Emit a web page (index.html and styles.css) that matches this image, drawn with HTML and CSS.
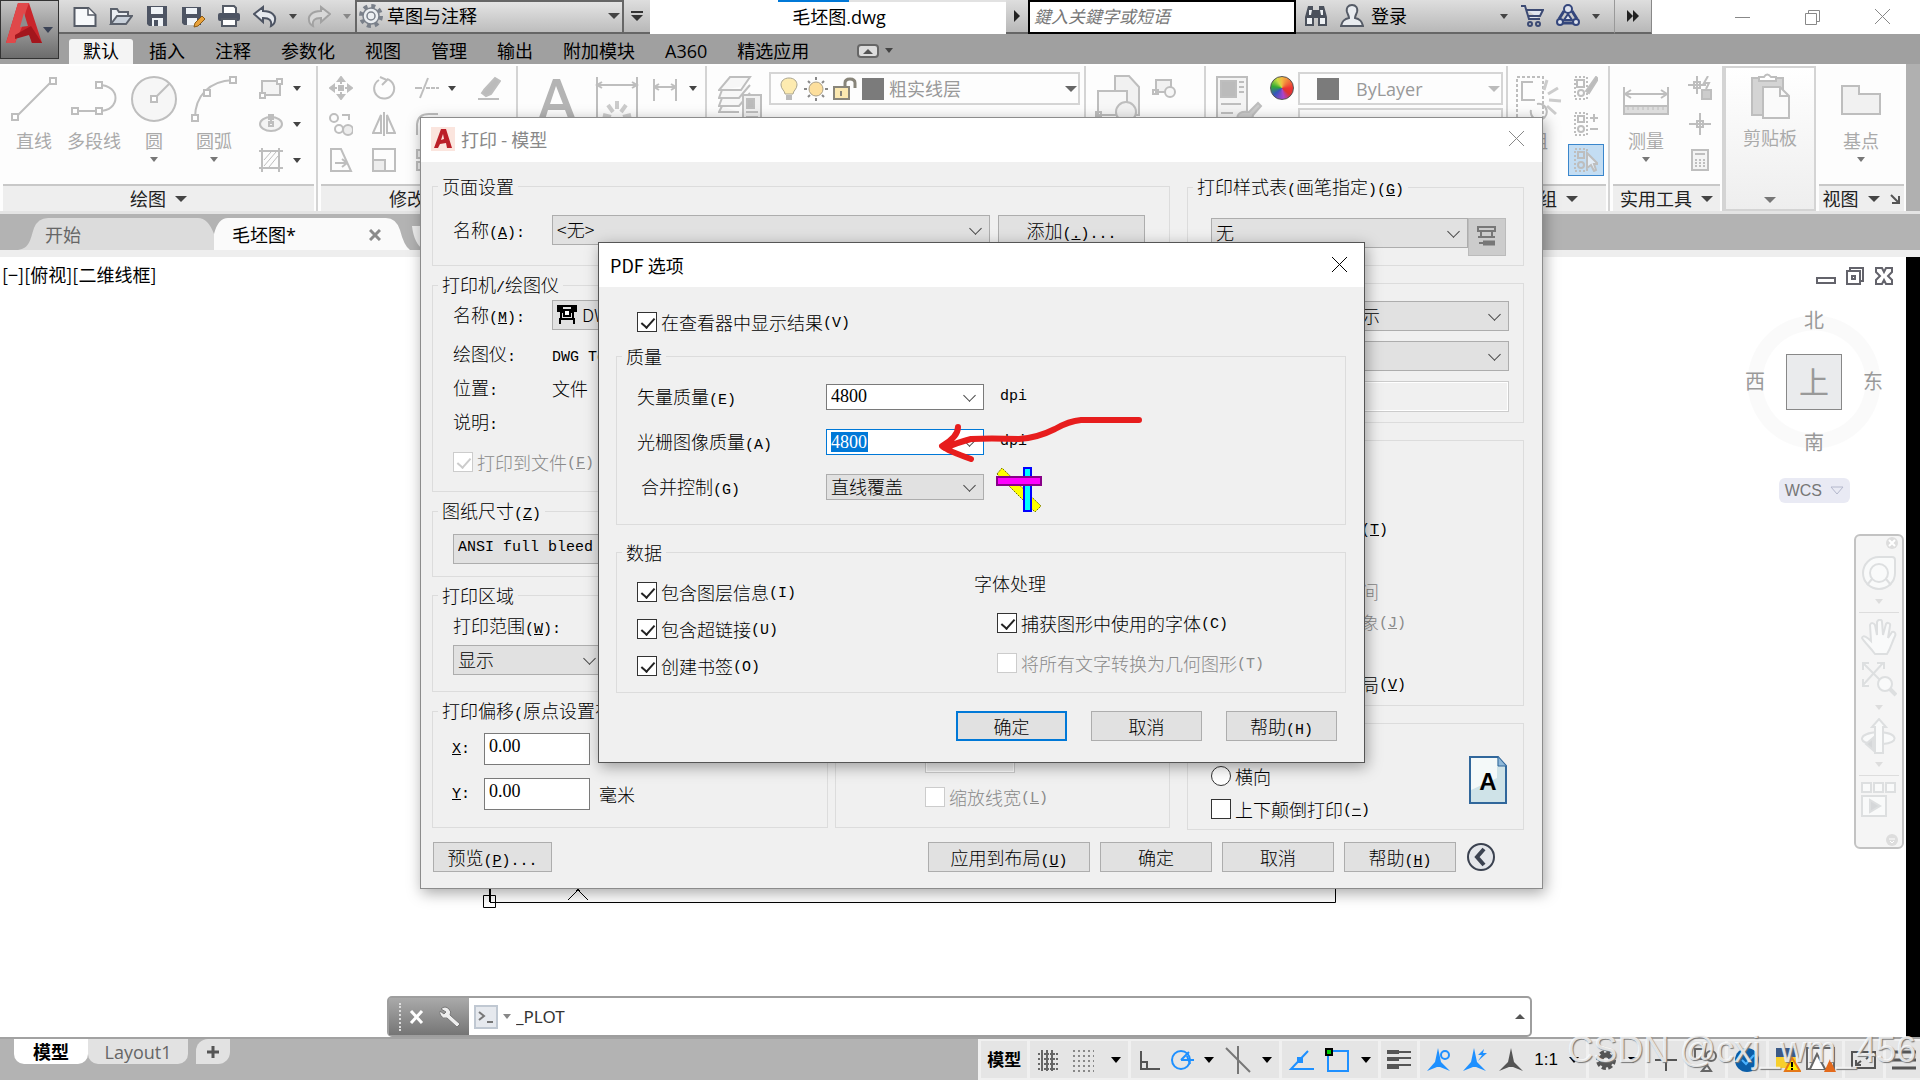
FILE: index.html
```html
<!DOCTYPE html>
<html lang="zh-CN">
  <head>
    <meta charset="UTF-8" />
    <meta name="viewport" content="width=device-width, initial-scale=1.0" />
    <title>毛坯图.dwg</title>
    <link rel="stylesheet" href="styles.css">
  </head>
  <body>
    <!--
      Title bar and ribbon tabs
    -->

    <header class="header">
      <button class="app-btn" type="button" aria-label="A">
        <svg width="38" height="44" viewBox="0 0 38 44">
          <path d="M1 42 13 2h11l13 40H27l-3-10-11 2-3 8z" fill="#c9252b" />
          <path d="M13 2h11l-3 8-4 16-7 16H1z" fill="#e0484a" />
          <path d="M15 26 19 12l4 13z" fill="#8d8d8d" />
          <path d="M10 34l16-9 11 17H27l-3-8-14 4z" fill="#a3161d" />
        </svg>
        <span class="arrow navy"></span>
      </button>

      <div class="titlebar">
        <div class="quick">
          <button type="button" aria-label="新建">
            <svg width="24" height="24" viewBox="0 0 24 24"><path d="M1.500 4h14l7 7v11h-21z" fill="#f7f9fb" stroke="#555b66" stroke-width="2" /><path d="M15 4v7h7" fill="#fff" stroke="#555b66" stroke-width="1.500" /></svg>
          </button>
          <button type="button" aria-label="打开">
            <svg width="24" height="24" viewBox="0 0 24 24"><path d="M2 20V5h6l2 3h9v4" fill="#e9edf2" stroke="#5b616c" stroke-width="2" /><path d="M2 20 8 12h15l-6 8z" fill="#c8d0da" stroke="#5b616c" stroke-width="2" /></svg>
          </button>
          <button type="button" aria-label="保存">
            <svg width="24" height="24" viewBox="0 0 24 24"><path d="M2 2h20v20H4l-2-2z" fill="#4d5463" /><path d="M6 3h12v7H6zM7 14h11v8H7z" fill="#eef2f6" /><path d="M9 16h4v6H9z" fill="#4d5463" /></svg>
          </button>
          <button type="button" aria-label="另存为">
            <svg width="24" height="24" viewBox="0 0 24 24"><path d="M1 3h19v18H3l-2-2z" fill="#4d5463" /><path d="M5 4h11v6H5zM6 14h10v7H6z" fill="#eef2f6" /><path d="M13 23l1-4 7-7 3 3-7 7z" fill="#e9a23b" stroke="#8b5a14" /></svg>
          </button>
          <button type="button" aria-label="打印">
            <svg width="24" height="24" viewBox="0 0 24 24"><path d="M6 9V2h11l2 2v5" fill="#fff" stroke="#555b66" stroke-width="2" /><rect x="1" y="9" width="22" height="8" rx="2" fill="#4d5463" /><path d="M5 15h14v7H5z" fill="#fff" stroke="#555b66" stroke-width="2" /></svg>
          </button>
          <button type="button" aria-label="放弃">
            <svg width="24" height="24" viewBox="0 0 24 24"><path d="M1 10 10 3v4c9 0 13 5 12 9 0 3-2 5-4 6 1-5-1-8-8-8v4z" fill="#e6e9ee" stroke="#4d5463" stroke-width="2" /></svg>
          </button>
          <span class="arrow"></span>
          <button type="button" aria-label="重做">
            <svg width="24" height="24" viewBox="0 0 24 24"><path d="M23 10 14 3v4C5 7 1 12 2 16c0 3 2 5 4 6-1-5 1-8 8-8v4z" fill="#d8d8d8" stroke="#a2a2a2" stroke-width="2" /></svg>
          </button>
          <span class="arrow dim"></span>
        </div>

        <button class="workspace" type="button">
          <svg width="26" height="26" viewBox="0 0 26 26" fill="none" stroke="#7a808a" stroke-width="1.500"><circle cx="13" cy="13" r="10" stroke-dasharray="4 3.850" stroke-width="4" /><circle cx="13" cy="13" r="8" fill="#eceff2" /><circle cx="13" cy="13" r="4" /></svg>
          草图与注释
          <span class="arrow big"></span>
        </button>
        <button class="more" type="button" aria-label="更多">
          <svg width="12" height="12" fill="#333"><path d="M0 1h12v2H0zM0 5h12l-6 6z" /></svg>
        </button>

        <h1 class="doc-name">毛坯图.dwg</h1>

        <button class="search-toggle" type="button" aria-label="展开"><span class="arrow-right"></span></button>
        <input class="search" type="text" placeholder="鍵入关鍵字或短语" aria-label="搜索" />

        <div class="account">
          <svg width="24" height="24" viewBox="0 0 24 24"><path d="M4 2h5v4h6V2h5l3 11v9h-9v-8h-4v8H1v-9z" fill="#4b515c" /><path d="M3 14h5v6H3zM16 14h5v6h-5zM5 6h3l-1 5H5zM16 6h3v5h-2z" fill="#eef1f4" /></svg>
          <svg width="24" height="24" viewBox="0 0 24 24"><path d="M12 1c4 0 6 3 5 7-1 3-2 4-2 6 5 1 7 3 8 8H1c1-5 3-7 8-8 0-2-1-3-2-6-1-4 1-7 5-7z" fill="#e9ecf0" stroke="#555b66" stroke-width="2" /></svg>
          <a href="#">登录</a>
          <span class="arrow"></span>
          <svg width="24" height="24" viewBox="0 0 24 24" fill="none" stroke="#3c4a73" stroke-width="2"><path d="M1 2h4l4 13h11M6 6h17l-3 6H8" fill="#dfe4ef" /><circle cx="10" cy="20" r="2" /><circle cx="18" cy="20" r="2" /></svg>
          <svg width="24" height="24" viewBox="0 0 24 24" fill="#dfe4ef" stroke="#34467c" stroke-width="2"><path d="M8 7 3 15M16 7l5 8M7 19h10" stroke-width="3" /><circle cx="12" cy="5" r="4" /><circle cx="4" cy="18" r="3" /><circle cx="20" cy="18" r="3" /><path d="M12 10l4 6H8z" /></svg>
          <span class="arrow"></span>
        </div>
        <button class="expand" type="button" aria-label="展开工具栏"><span class="arrow-right"></span><span class="arrow-right"></span></button>

        <div class="window-btns">
          <button type="button" aria-label="最小化"><svg width="16" height="16" stroke="#888"><path d="M0 8.500h15" /></svg></button>
          <button type="button" aria-label="还原"><svg width="16" height="16" fill="none" stroke="#888"><path d="M.5 4.500h11v11H.5zM3.500 4V1.500h11v11H12" /></svg></button>
          <button type="button" aria-label="关闭"><svg width="16" height="16" stroke="#888"><path d="M0 0 15 15M15 0 0 15" /></svg></button>
        </div>
      </div>

      <nav class="tabs">
        <button class="active" type="button">默认</button>
        <button type="button">插入</button>
        <button type="button">注释</button>
        <button type="button">参数化</button>
        <button type="button">视图</button>
        <button type="button">管理</button>
        <button type="button">输出</button>
        <button type="button">附加模块</button>
        <button type="button">A360</button>
        <button type="button">精选应用</button>
        <span class="tabs-toggle"><span class="arrow-up"></span></span>
        <span class="arrow"></span>
      </nav>
    </header>

    <!--
      Ribbon
    -->

    <section class="ribbon">
      <div class="panel draw">
        <div class="tools">
          <button class="tool" type="button">
            <svg width="46" height="46" class="ink"><path d="M5 41 41 5" /><path d="M1 38h6v6H1zM39 2h6v6h-6z" fill="#fff" /></svg>
            直线
          </button>
          <button class="tool" type="button">
            <svg width="46" height="46" class="ink"><path d="M4 35h24c22 0 22-26 0-26" /><path d="M1 32h6v6H1zM25 32h6v6h-6zM25 6h6v6h-6z" fill="#fff" /></svg>
            多段线
          </button>
          <button class="tool" type="button">
            <svg width="46" height="46" class="ink"><circle cx="23" cy="23" r="22" fill="#f6f6f6" /><path d="M23 23 38 8" /><path d="M20 20h6v6h-6z" fill="#fff" /></svg>
            圆
            <span class="arrow"></span>
          </button>
          <button class="tool" type="button">
            <svg width="46" height="46" class="ink"><path d="M4 42C4 20 18 5 42 4" /><path d="M1 39h6v6H1zM13 14h6v6h-6zM39 1h6v6h-6z" fill="#fff" /></svg>
            圆弧
            <span class="arrow"></span>
          </button>
          <div class="small-tools pairs">
            <svg width="24" height="24" class="ink"><path d="M3 5h18v14H3z" fill="#f4f4f4" /><path d="M1 17h5v5H1zM18 3h5v5h-5z" fill="#fff" /></svg>
            <span class="arrow"></span>
            <svg width="24" height="24" class="ink"><ellipse cx="12" cy="12" rx="11" ry="7" fill="#f4f4f4" /><path d="M12 12V4M10 10h4v4h-4zM10 3h4v4h-4z" /></svg>
            <span class="arrow"></span>
            <svg width="24" height="24" class="ink"><path d="M3 0v24M20 0v24M0 3h24M0 20h24" /><path d="M5 12l7-8M5 18 17 4M10 19 19 8" stroke-width="1" /></svg>
            <span class="arrow"></span>
          </div>
        </div>
        <h2 class="panel-title">绘图 <span class="arrow big"></span></h2>
      </div>

      <div class="panel modify">
        <div class="tools">
          <div class="small-tools">
            <svg width="24" height="24" class="ink"><path d="M12 1v22M1 12h22" stroke-dasharray="7 8 7" /><path d="M9 5l3-4 3 4zM9 19l3 4 3-4zM5 9l-4 3 4 3zM19 9l4 3-4 3zM10 10h4v4h-4z" fill="#bbb" /></svg>
            <svg width="24" height="24" class="ink"><path d="M7 4a10 10 0 1 0 8-1M8 1l7 3-5 5" /></svg>
            <span class="trim">
              <svg width="24" height="24" class="ink"><path d="M0 12h7" /><path d="M11 12h13" stroke-dasharray="4 1" /><path d="M5 22 13 2" /></svg>
              <span class="arrow"></span>
            </span>
            <svg width="24" height="24" class="ink"><path d="M1 23h21" /><path d="M7 14 18 2l5 3-9 13-5 2-4-3z" fill="#bbb" /></svg>
            <svg width="24" height="24" class="ink"><circle cx="5" cy="6" r="4" /><circle cx="10" cy="17" r="4" /><circle cx="19" cy="18" r="5" fill="#ededed" /><path d="M13 3h7v5" /></svg>
            <svg width="24" height="24" class="ink"><path d="M9 3v18H1zM15 3v18h8zM12 0v24" /></svg>
            <svg width="24" height="24" class="ink"><path d="M2 23V12Q3 2 14 2h9" /></svg>
            <svg width="24" height="24"></svg>
            <svg width="24" height="24" class="ink"><path d="M2 1h10l10 22H2zM6 15h11M13 11l5 4-5 4" /></svg>
            <svg width="24" height="24" class="ink"><path d="M1 1h22v22H1z" /><path d="M1 12h12v11H1z" fill="#ededed" /></svg>
            <svg width="24" height="24" class="ink"><path d="M2 2h8v8H2zM2 14h8v8H2z" fill="#ededed" /></svg>
          </div>
        </div>
        <h2 class="panel-title">修改 <span class="arrow big"></span></h2>
      </div>

      <div class="panel annotate">
        <div class="tools">
          <svg width="46" height="46" fill="#b4b4b4"><path d="M3 46 19 2h7l17 44h-7l-5-13H14l-4 13zM16 27h13L22 9z" /></svg>
          <svg width="46" height="46" class="ink"><path d="M3 0v46M43 0v46M3 8h40M8 5 3 8l5 3M38 5l5 3-5 3" /><path d="M23 24v8M14 28l5 7M32 28l-5 7M9 38l8 2M37 38l-8 2" stroke="#ccc" stroke-width="4" /></svg>
          <svg width="24" height="24" class="ink"><path d="M1 2v22M23 2v22M1 10h22M6 7l-5 3 5 3M18 7l5 3-5 3" /></svg>
          <span class="arrow"></span>
        </div>
      </div>

      <div class="panel layers">
        <div class="tools">
          <svg width="46" height="46" class="ink"><path d="M12 1h20l-9 13H1zM4 14l-3 8h20L32 9M4 22l-3 8h20L32 17M4 30l-3 6h20" fill="#f7f7f7" /><path d="M25 19h18v27H25z" fill="#f1f1f1" /><path d="M29 23h7v9h-7z" fill="#bbb" /><path d="M28 36h12M28 41h12" /></svg>
          <button class="layer-box" type="button">
            <svg width="20" height="24" viewBox="0 0 20 24"><path d="M10 1c5 0 8 3 8 7s-4 6-4 9H6c0-3-4-5-4-9s3-7 8-7z" fill="#fdebb0" stroke="#a9a48f" /><path d="M7 18h6v5H7z" fill="#bbb" /></svg>
            <svg width="24" height="24" viewBox="0 0 24 24"><path d="M12 0v3M12 21v3M0 12h3M21 12h3M4 4l2 2M18 18l2 2M20 4l-2 2M6 18l-2 2" stroke="#888" stroke-width="2" /><circle cx="12" cy="12" r="7" fill="#fddf9d" stroke="#aaa08a" /></svg>
            <svg width="24" height="24" viewBox="0 0 24 24" fill="none" stroke="#88857a" stroke-width="2"><path d="M12 10V6q0-4 5-4t5 4v5" stroke-width="3" /><path d="M1 10h15v12H1z" fill="#fbe8b0" /><path d="M8 14v5" /></svg>
            <span class="swatch"></span>
            粗实线层
            <span class="arrow big"></span>
          </button>
        </div>
      </div>

      <div class="panel block">
        <div class="tools">
          <svg width="46" height="46" class="ink"><path d="M20 1h14l10 11v28H20z" fill="#f1f1f1" /><path d="M3 16h29v24H3z" fill="#f7f7f7" /><circle cx="31" cy="37" r="10" fill="#f1f1f1" /><path d="M1 37h5v5H1z" /></svg>
          <svg width="24" height="24" class="ink"><path d="M4 5h15v12H4z" fill="#f1f1f1" /><circle cx="18" cy="17" r="5" fill="#f7f7f7" /><path d="M1 15h5v4H1z" /></svg>
        </div>
      </div>

      <div class="panel props">
        <div class="tools">
          <svg width="48" height="46" class="ink"><path d="M2 1h30v45H2z" fill="#f4f4f4" /><path d="M6 5h15v16H6z" fill="#bbb" /><path d="M24 6h5M24 11h5M24 16h5M6 28h20M6 37h12" /><path d="M22 44q0-10 12-8l9-9 3 3-8 9q0 6-12 6z" fill="#ccc" /></svg>
          <span class="wheel"></span>
          <div class="prop-boxes">
            <button class="prop-box" type="button"><span class="swatch"></span>ByLayer<span class="arrow big"></span></button>
            <span class="prop-box"></span>
          </div>
        </div>
      </div>

      <div class="panel group">
        <div class="tools">
          <button class="tool" type="button">
            <svg width="46" height="46" class="ink"><path d="M1 1h26v44H1z" stroke-dasharray="3 2" /><path d="M17 6H6v18h13M15 34a8 8 0 1 0 6-6" /><path d="M32 18l10-6M33 24l12 1M28 14l3-10M31 30l9 8" stroke="#ccc" stroke-width="3" /></svg>
            组
          </button>
          <div class="small-tools single">
            <svg width="24" height="24" class="ink"><path d="M1 1h12v22H1z" stroke-dasharray="2 2" /><path d="M3 4h7v7H3z" /><circle cx="7" cy="17" r="3" /><path d="M12 15 22 1l2 2-9 14z" fill="#bbb" /></svg>
            <svg width="24" height="24" class="ink"><path d="M1 1h12v22H1z" stroke-dasharray="2 2" /><path d="M4 4h6v6H4zM16 6h8M20 2v8M16 17h8" /><circle cx="7" cy="17" r="3" /></svg>
            <svg width="24" height="24" class="ink pressed"><path d="M1 1h12v22H1z" stroke-dasharray="2 2" /><path d="M4 4h6v6H4z" /><circle cx="7" cy="17" r="3" /><path d="M13 5v15l4-3 3 6 2-1-2-6h4z" fill="#e4eef8" /></svg>
          </div>
        </div>
        <h2 class="panel-title">组 <span class="arrow big"></span></h2>
      </div>

      <div class="panel utils">
        <div class="tools">
          <button class="tool" type="button">
            <svg width="46" height="46" class="ink"><path d="M1 11v18M45 11v18M2 18h42M8 14l-6 4 6 4M38 14l6 4-6 4" /><path d="M1 30h44v8H1z" fill="#ddd" /><path d="M5 30v4M10 30v4M15 30v4M20 30v4M25 30v4M30 30v4M35 30v4M40 30v4" stroke-width="1" /></svg>
            测量
            <span class="arrow"></span>
          </button>
          <div class="small-tools single">
            <svg width="24" height="24" class="ink"><path d="M0 9h18M9 0v18M6 6h6v6H6zM20 0l-4 7h5l-3 6" /><path d="M14 14h9v9h-9z" fill="#ccc" /></svg>
            <svg width="24" height="24" class="ink"><path d="M1 12h22M12 1v22M9 9h6v6H9z" /></svg>
            <svg width="24" height="24" class="ink"><path d="M4 2h16v20H4z" fill="#f4f4f4" /><path d="M7 6h10" /><path d="M7 12h10M7 15h10M7 18h10" stroke-dasharray="2 2" /></svg>
          </div>
        </div>
        <h2 class="panel-title">实用工具 <span class="arrow big"></span></h2>
      </div>

      <div class="panel clipboard">
        <button class="tool" type="button">
          <svg width="46" height="46" class="ink"><path d="M5 5h31v37H5z" fill="#d4d4d4" /><path d="M12 8V4h5q3-5 7 0h5v4z" fill="#fff" /><path d="M16 14h17l9 9v22H16z" fill="#fafafa" /><path d="M33 14v9h9" /></svg>
          剪贴板
        </button>
        <span class="arrow big"></span>
      </div>

      <div class="panel view">
        <div class="tools">
          <button class="tool" type="button">
            <svg width="46" height="46" class="ink"><path d="M4 10h17v8h21v20H4z" fill="#f1f1f1" /></svg>
            基点
            <span class="arrow"></span>
          </button>
        </div>
        <h2 class="panel-title">视图 <span class="arrow big"></span>
          <svg width="12" height="12" fill="none" stroke="#555" stroke-width="2"><path d="M2 2l8 8M10 3v7H3" /></svg>
        </h2>
      </div>
    </section>

    <nav class="doc-tabs">
      <button type="button">开始</button>
      <button class="active" type="button">毛坯图*
        <svg width="12" height="12" stroke="#8a8a8a" stroke-width="3"><path d="M1 1l10 10M11 1 1 11" /></svg>
      </button>
      <button class="new" type="button" aria-label="新图形"></button>
    </nav>

    <!--
      Drawing area
    -->

    <main class="drawing">
      <p class="view-label">[−][俯视][二维线框]</p>

      <div class="mdi-btns">
        <svg width="20" height="20" fill="#fff" stroke="#63636b" stroke-width="2"><path d="M1 12h18v5H1z" /></svg>
        <svg width="20" height="20" fill="#fff" stroke="#63636b" stroke-width="2"><path d="M5 2h13v13H5z" /><path d="M2 5h13v13H2z" /><path d="M7 10h3v3H7z" /></svg>
        <svg width="20" height="20" fill="#fff" stroke="#63636b" stroke-width="2"><path d="M2 2h6l2 4 2-4h6v4l-4 4 4 4v4h-6l-2-4-2 4H2v-4l4-4-4-4z" /></svg>
      </div>

      <div class="viewcube">
        <span>北</span>
        <span>西</span>
        <button type="button">上</button>
        <span>东</span>
        <span>南</span>
      </div>
      <button class="wcs" type="button">WCS
        <svg width="14" height="9" fill="none" stroke="#b4b8cc"><path d="M1 1h12L7 8z" /></svg>
      </button>

      <div class="navbar">
        <svg class="corner" width="12" height="12"><circle cx="6" cy="6" r="6" fill="#ddd" /><path d="M3 3l6 6M9 3 3 9" stroke="#fff" stroke-width="2" /></svg>
        <svg width="36" height="36" class="faint"><path d="M18 2h13q3 0 3 3v13A16 16 0 1 1 18 2z" /><circle cx="18" cy="18" r="9" /><path d="M11 24l-5 6M25 24l5 6" /></svg>
        <span class="arrow faint-arrow"></span>
        <hr />
        <svg width="36" height="36" class="faint"><path d="M14 35C9 28 4 24 1 19c1-4 6 0 9 3L9 6c1-3 4-2 5 0l2 10V3c1-3 5-3 5 0l1 13 3-11c1-2 5-1 4 2l-2 12 4-6c3-1 4 2 3 4-3 6-4 12-8 18z" /></svg>
        <svg width="36" height="36" class="faint"><path d="M2 2l20 20M22 2 2 24M2 9V2h6M16 2h7v6M2 18v7h6" /><circle cx="24" cy="23" r="7" /><path d="M29 28l6 6" stroke-width="4" /></svg>
        <span class="arrow faint-arrow"></span>
        <svg width="36" height="36" class="faint"><path d="M18 14C-4 15-4 26 14 26h8c16-1 16-11-4-12z" /><path d="M14 35V9h-3l7-8 7 8h-3v26z" /><path d="M12 20v12l-7-6z" fill="#d5d7d9" /></svg>
        <span class="arrow faint-arrow"></span>
        <hr />
        <svg width="36" height="36" class="faint"><path d="M1 1h9v9H1zM13 1h9v9h-9zM25 1h9v9h-9zM1 14h24v20H1z" /><path d="M9 18v12l10-6z" fill="#d5d7d9" /></svg>
        <svg class="corner last" width="12" height="12"><circle cx="6" cy="6" r="6" fill="#ddd" /><path d="M3 5h6M4 7l2 2 2-2" stroke="#fff" fill="none" /></svg>
      </div>

      <svg class="sketch" width="860" height="24" fill="none" stroke="#000">
        <path d="M7.500 0v15M1.500 8.500h12v12h-12z" />
        <path d="M8 15.500h845.500V0M96 3 86 13M96 3l10 10M94 0l4 4M98 0l-4 4" />
        <path d="M8 0v15" stroke-width="2" />
      </svg>

      <div class="command">
        <div class="command-handle">
          <i></i>
          <svg width="16" height="16" stroke="#fff" stroke-width="3"><path d="M2 2l11 12M13 2 2 14" /></svg>
          <svg width="22" height="22"><path d="M2 3q4-4 8 0 3 3 1 6l10 9-3 3-10-9q-4 1-6-2-2-3-1-5l4 3 2-2z" fill="#eee" stroke="#777" /></svg>
        </div>
        <svg width="24" height="24" fill="none" stroke="#c0c8d2" stroke-width="2"><path d="M1 1h22v22H1z" fill="#e6e9ee" /><path d="M5 7l5 4-5 4M13 17h6" stroke="#777" /></svg>
        <span class="arrow dim"></span>
        <input type="text" value="_PLOT" aria-label="命令" />
        <span class="arrow-up"></span>
      </div>
    </main>

    <!--
      Layout tabs and status bar
    -->

    <footer class="footer">
      <nav class="layouts">
        <button class="active" type="button">模型</button>
        <button type="button">Layout1</button>
        <button class="plus" type="button" aria-label="新建布局"><svg width="14" height="14" stroke="#555" stroke-width="3"><path d="M7 1v12M1 7h12" /></svg></button>
      </nav>
      <div class="status">
        <div class="cell"><b>模型</b></div>
        <div class="cell">
          <svg width="24" height="24" stroke="#666" stroke-width="2"><path d="M6 2v21M11 2v21M16 2v21" /><path d="M2 6h21M2 11h21M2 16h21M2 21h21" stroke-dasharray="2 1" /></svg>
          <svg class="dots" width="24" height="24" stroke="#888" stroke-width="2"><path d="M2 3h21M2 8h21M2 13h21M2 18h21M2 23h21" stroke-dasharray="2 3" /></svg>
          <span class="arrow black"></span>
        </div>
        <div class="cell polar">
          <svg width="24" height="24" fill="none" stroke="#555" stroke-width="2"><path d="M4 3v18h19M4 14h6v7" /></svg>
          <svg width="24" height="24" fill="none" stroke="#1e90ff" stroke-width="2"><circle cx="11" cy="12" r="9" /><path d="M11 12h13M11 12l8-8M17 8l3 8" /></svg>
          <span class="arrow black"></span>
          <svg width="28" height="28" fill="none" stroke="#777" stroke-width="2"><path d="M2 2l24 24M14 0v28" /></svg>
          <span class="arrow black"></span>
        </div>
        <div class="cell snap">
          <svg width="26" height="24" fill="none" stroke="#1e90ff" stroke-width="2"><path d="M20 3 3 21h23" /><path d="M10 10h4v4h-4z" fill="#1e90ff" /></svg>
          <svg width="24" height="24" fill="none" stroke="#1e90ff" stroke-width="2"><path d="M3 3h20v20H3z" /><path d="M1 1h6v6H1z" fill="#0c0" stroke="#000" /></svg>
          <span class="arrow black"></span>
        </div>
        <div class="cell">
          <svg width="24" height="24" stroke="#555"><path d="M0 4h24M0 10h24M0 17h24" stroke-width="2" /><path d="M0 4h12M0 11h12M0 19h12" stroke-width="4" /></svg>
        </div>
        <div class="cell notes">
          <svg width="26" height="26" fill="#1e90ff"><path d="M12 1l3 14 9 9-10-4h-3L1 24l8-9z" /><circle cx="19" cy="8" r="4" fill="#e6e6e6" stroke="#1e90ff" stroke-width="2" /></svg>
          <svg width="26" height="26" fill="#1e90ff"><path d="M12 1l3 14 9 9-10-4h-3L1 24l8-9z" /><path d="M22 2l-6 6h4l-4 6 9-8h-4z" /></svg>
          <svg width="26" height="26" fill="#555"><path d="M13 1l3 14 9 9-10-4h-4L1 24l9-9z" /></svg>
          <span>1:1</span>
          <span class="arrow black"></span>
        </div>
        <div class="cell gear">
          <svg width="22" height="22" fill="none" stroke="#555"><circle cx="11" cy="11" r="8" stroke-width="4" stroke-dasharray="4 2.300" /><circle cx="11" cy="11" r="5" stroke-width="5" /></svg>
          <span class="arrow black"></span>
        </div>
        <div class="cell"><svg width="24" height="24" stroke="#555" stroke-width="2"><path d="M12 2v21M1 12h22" /></svg></div>
        <div class="cell"><svg width="26" height="26" fill="none" stroke="#666" stroke-width="2"><path d="M2 2h10v10H2zM14 18l4 6H9z" /><circle cx="18" cy="9" r="5" /></svg></div>
        <div class="cell"><svg width="26" height="26"><circle cx="13" cy="13" r="12" fill="#0b5ea8" /><path d="M8 13l4 4 8-9" stroke="#4bb2ff" stroke-width="2" fill="none" /></svg></div>
        <div class="cell trays">
          <svg width="26" height="26"><path d="M1 1h20v9H1z" fill="#3c5a86" /><path d="M1 10h20v11H1z" fill="#f7cf2c" /><path d="M17 11l8 13H10z" fill="#fe0" stroke="#e57817" stroke-width="2" /><path d="M17 15v5M17 21v2" stroke="#000" stroke-width="2" /></svg>
          <svg width="30" height="28" fill="none" stroke="#666" stroke-width="2"><path d="M1 2h27v21H1z" fill="#f1f1f1" /><path d="M4 23l7-15 8 15" fill="#fff" /><path d="M24 13l6 13H18z" fill="#e36a1c" stroke="none" /></svg>
        </div>
        <div class="cell"><svg width="26" height="26" fill="none" stroke="#555" stroke-width="2"><path d="M1 5h23v16H1zM5 13v5h5M5 18l5-4M20 12V8h-5M20 8l-5 4" /></svg></div>
        <div class="cell"><svg width="24" height="24" stroke="#555" stroke-width="3"><path d="M0 4h24M0 12h24M0 20h24" /></svg></div>
      </div>
      <p class="watermark">CSDN @cxj_wm_456</p>
    </footer>

    <!--
      Plot dialog
    -->

    <section class="dialog plot" aria-label="打印 - 模型">
      <div class="dialog-title">
        <svg width="24" height="24"><path d="M0 0h24v24H0z" fill="#fbe5de" /><path d="M3 21 10 2h5l6 19h-5l-1-5-6 1-2 4zM10 13l3-1-1-5z" fill="#bb1f28" fill-rule="evenodd" /></svg>
        <h2>打印 - 模型</h2>
        <button type="button" aria-label="关闭"><svg width="16" height="16" stroke="#888"><path d="M0 0 15 15M15 0 0 15" /></svg></button>
      </div>
      <form class="plot-body">
        <div class="plot-left">
          <fieldset>
            <legend>页面设置</legend>
            <div class="row first">
              <label for="setup">名称<span class="key">(<u>A</u>):</span></label>
              <span class="select setup"><select id="setup"><option>&lt;无&gt;</option></select></span>
              <button class="btn add" type="button">添加<span class="key">(<u>.</u>)...</span></button>
            </div>
          </fieldset>

          <fieldset class="printer">
            <legend>打印机<span class="key">/</span>绘图仪</legend>
            <div class="row">
              <label for="printer">名称<span class="key">(<u>M</u>):</span></label>
              <span class="select setup with-icon">
                <svg width="20" height="20" fill="none" stroke="#000" stroke-width="2"><path d="M1 2h4v5H1zM15 2h4v5h-4z" fill="#000" /><path d="M5 2h10M4 8v7h12V8M2 15h16M3 15v5M17 15v5M4 8h12" /><path d="M7 6h6v6H7z" fill="#fff" /></svg>
                <select id="printer"><option>DWG</option></select>
              </span>
            </div>
            <dl>
              <dt>绘图仪<span class="key">:</span></dt>
              <dd><span class="key">DWG To</span></dd>
              <dt>位置<span class="key">:</span></dt>
              <dd>文件</dd>
              <dt>说明<span class="key">:</span></dt>
              <dd></dd>
            </dl>
            <label class="check off"><input type="checkbox" checked disabled />打印到文件<span class="key">(<u>F</u>)</span></label>
          </fieldset>

          <fieldset class="paper">
            <legend>图纸尺寸<span class="key">(<u>Z</u>)</span></legend>
            <span class="select mono"><select aria-label="图纸尺寸"><option>ANSI full bleed</option></select></span>
          </fieldset>

          <fieldset class="area">
            <legend>打印区域</legend>
            <label for="area">打印范围<span class="key">(<u>W</u>):</span></label>
            <span class="select"><select id="area"><option>显示</option></select></span>
          </fieldset>

          <div class="plot-pair">
            <fieldset class="offset">
              <legend>打印偏移<span class="key">(</span>原点设置在</legend>
              <div class="row"><label class="key" for="x"><u>X</u>:</label><input id="x" type="text" value="0.00" /></div>
              <div class="row"><label class="key" for="y"><u>Y</u>:</label><input id="y" type="text" value="0.00" />毫米</div>
            </fieldset>
            <fieldset class="scale">
              <input type="text" disabled aria-label="单位" />
              <label class="check off"><input type="checkbox" disabled />缩放线宽<span class="key">(<u>L</u>)</span></label>
            </fieldset>
          </div>
        </div>

        <div class="plot-right">
          <fieldset>
            <legend>打印样式表<span class="key">(</span>画笔指定<span class="key">)(<u>G</u>)</span></legend>
            <div class="row first">
              <span class="select"><select aria-label="打印样式表"><option>无</option></select></span>
              <button class="btn edit" type="button" aria-label="编辑"><svg width="20" height="24" fill="none" stroke="#777" stroke-width="2"><path d="M1 2h17v4H1zM4 6v6h11V6M1 12h17M2 18h12" /><path d="M6 18h12" stroke-width="5" /></svg></button>
            </div>
          </fieldset>

          <fieldset class="shade">
            <span class="select"><select aria-label="着色打印"><option>按显示</option></select></span>
            <span class="select"><select aria-label="质量"><option></option></select></span>
            <input type="text" disabled aria-label="DPI" />
          </fieldset>

          <fieldset class="options">
            <label class="check"><input type="checkbox" />使用透明度打印<span class="key">(<u>T</u>)</span></label>
            <label class="check off skip"><input type="checkbox" disabled />最后打印图纸空间</label>
            <label class="check off"><input type="checkbox" disabled />隐藏图纸空间对象<span class="key">(<u>J</u>)</span></label>
            <label class="check skip"><input type="checkbox" />将修改保存到布局<span class="key">(<u>V</u>)</span></label>
          </fieldset>

          <fieldset class="orient">
            <div class="orient-row">
              <div>
                <label class="check"><input type="radio" name="orient" />横向</label>
                <label class="check"><input type="checkbox" />上下颠倒打印<span class="key">(<u>−</u>)</span></label>
              </div>
              <span class="page-icon">
                <svg width="38" height="48"><path d="M1 1h28l8 9v37H1z" fill="#cfe3e8" stroke="#31679b" stroke-width="2" /><path d="M2 2h26v20L2 34z" fill="#f4f9f9" /><path d="M29 1v9h8" fill="#8fb8d8" stroke="#31679b" /></svg>
                <b>A</b>
              </span>
            </div>
          </fieldset>
        </div>

        <div class="plot-foot">
          <button class="btn preview" type="button">预览<span class="key">(<u>P</u>)...</span></button>
          <button class="btn apply" type="button">应用到布局<span class="key">(<u>U</u>)</span></button>
          <button class="btn" type="button">确定</button>
          <button class="btn" type="button">取消</button>
          <button class="btn" type="button">帮助<span class="key">(<u>H</u>)</span></button>
          <button class="round" type="button" aria-label="收起"><svg width="30" height="30" fill="none" stroke="#3b4250"><circle cx="15" cy="15" r="13" fill="#e4e6ea" stroke-width="2" /><path d="M18 7l-7 8 7 8" stroke-width="4" /></svg></button>
        </div>
      </form>
    </section>

    <!--
      PDF options dialog
    -->

    <section class="dialog pdf" aria-label="PDF 选项">
      <div class="dialog-title">
        <h2>PDF 选项</h2>
        <button type="button" aria-label="关闭"><svg width="16" height="16" stroke="#000"><path d="M0 0 15 15M15 0 0 15" /></svg></button>
      </div>
      <form class="pdf-body">
        <label class="check show"><input type="checkbox" checked />在查看器中显示结果<span class="key">(V)</span></label>

        <fieldset class="quality">
          <legend>质量</legend>
          <div class="row">
            <label for="vector">矢量质量<span class="key">(E)</span></label>
            <span class="select white"><select id="vector"><option>4800</option></select></span>
            <span class="key unit">dpi</span>
          </div>
          <div class="row">
            <label for="raster">光栅图像质量<span class="key">(A)</span></label>
            <span class="select white focus"><input id="raster" type="text" value="4800" /></span>
            <span class="key unit">dpi</span>
          </div>
          <div class="row">
            <label class="indent" for="merge">合并控制<span class="key">(G)</span></label>
            <span class="select"><select id="merge"><option>直线覆盖</option></select></span>
            <svg class="merge-icon" width="46" height="46"><path d="M1 7 6 1l39 38-6 6z" fill="#ff0" stroke="#770" stroke-dasharray="2 1" /><path d="M28 1h7v43h-7z" fill="#0ff" stroke="#00f" stroke-width="2" /><path d="M1 10h44v8H1z" fill="#f0f" stroke="#808" stroke-width="2" /></svg>
          </div>
        </fieldset>

        <fieldset class="data">
          <legend>数据</legend>
          <div class="data-cols">
            <div>
              <label class="check"><input type="checkbox" checked />包含图层信息<span class="key">(I)</span></label>
              <label class="check"><input type="checkbox" checked />包含超链接<span class="key">(U)</span></label>
              <label class="check"><input type="checkbox" checked />创建书签<span class="key">(O)</span></label>
            </div>
            <div class="fonts">
              <p>字体处理</p>
              <label class="check"><input type="checkbox" checked />捕获图形中使用的字体<span class="key">(C)</span></label>
              <label class="check off"><input type="checkbox" disabled />将所有文字转换为几何图形<span class="key">(T)</span></label>
            </div>
          </div>
        </fieldset>

        <div class="pdf-foot">
          <button class="btn default" type="button">确定</button>
          <button class="btn" type="button">取消</button>
          <button class="btn" type="button">帮助<span class="key">(H)</span></button>
        </div>
      </form>

      <svg class="mark" width="210" height="50" fill="none" stroke="#e71d1d" stroke-width="6" stroke-linecap="round" stroke-linejoin="round">
        <path d="M203 8h-58q-12 1-26 9-18 9-36 10-30-1-48 0-12 3-26 9M22 15q0 10-16 19 6 5 29 13" />
      </svg>
    </section>
  </body>
</html>
```
FILE: styles.css
```css
/*
  Global styles
*/

:root {
  --face: #f0f0f0;
  --line: #dcdcdc;
  --control: #e1e1e1;
  --control-line: #adadad;
  --blue: #0078d7;
  --bar: #b3b3b3;
}
* {
  margin: 0;
  padding: 0;
  box-sizing: border-box;
}
body {
  display: flex;
  flex-direction: column;
  min-height: 100vh;
  overflow: hidden;
  color: #000;
  font: 18px/20px "Open Sans", "Noto Sans CJK SC", sans-serif;
  background-color: white;
}
button,
input,
select {
  font: inherit;
  color: inherit;
  border: none;
  outline: none;
  background: none;
}
h1,
h2 {
  font-size: 18px;
  font-weight: 400;
}
svg {
  flex: none;
  display: block;
}

/*
  Small shared shapes
*/

.arrow,
.arrow-up,
.arrow-right {
  flex: none;
  display: inline-block;
  border: 4px solid transparent;
}
.arrow {
  border-width: 5px 4px 0;
  border-top-color: #444;
}
.arrow.big {
  border-width: 6px 6px 0;
}
.arrow.black {
  border-width: 6px 5px 0;
  border-top-color: black;
}
.arrow.navy {
  border-width: 6px 5px 0;
  border-top-color: #3b4356;
}
.arrow.dim {
  border-top-color: #888;
}
.arrow-up {
  border-width: 0 5px 5px;
  border-bottom-color: #555;
}
.arrow-right {
  border-width: 6px 0 6px 6px;
  border-left-color: #222;
}
.ink {
  fill: none;
  stroke: #bebebe;
  stroke-width: 2;
}
.faint {
  fill: #f9fafa;
  stroke: #dddfe0;
  stroke-width: 2;
}
.swatch {
  width: 22px;
  height: 22px;
  background-color: #7b7b7b;
}

/*
  Header
*/

.header {
  display: grid;
  grid-template-columns: 59px 1fr;
  grid-template-rows: 34px 30px;
  background-color: #a0a0a0;
}
.app-btn {
  display: flex;
  align-items: center;
  grid-row: 1 / 3;
  height: 59px;
  padding-left: 4px;
  border: 1px solid #333;
  background: linear-gradient(#c4c4c4, #6c6c6c);
}
.app-btn svg {
  margin-bottom: 14px;
}
.titlebar {
  display: flex;
  background-color: white;
}
.quick,
.account {
  display: flex;
  align-items: center;
  gap: 12px;
  padding: 0 6px 0 14px;
  border-bottom: 2px solid #666;
  background: linear-gradient(#dedede, #b8b8b8);
}
.quick .arrow {
  margin-right: -2px;
}
.workspace {
  display: flex;
  align-items: center;
  gap: 3px;
  width: 269px;
  padding: 0 2px 2px 1px;
  border: 2px solid #666;
  background: linear-gradient(#e4e4e4, #bdbdbd);
}
.workspace .arrow {
  margin-left: auto;
}
.more,
.search-toggle,
.expand {
  display: flex;
  align-items: center;
  justify-content: center;
  width: 26px;
  border-bottom: 2px solid #666;
  background: linear-gradient(#dedede, #b8b8b8);
}
.doc-name {
  flex: 1;
  height: 34px;
  padding-left: 22px;
  line-height: 30px;
  text-align: center;
  border-top: 2px solid #e2e2e2;
  border-image: linear-gradient(90deg, #fff 36%, var(--blue) 36%, var(--blue) 56%, #e2e2e2 56%) 1;
}
.search-toggle {
  width: 22px;
}
.search {
  width: 268px;
  padding: 0 4px 2px;
  border: 2px solid black;
  background-color: white;
}
.search::placeholder {
  color: #777;
  font-size: 17px;
  font-style: italic;
}
.account {
  width: 318px;
  padding-left: 8px;
}
.account a {
  width: 117px;
  margin-left: -5px;
  color: black;
  text-decoration: none;
}
.expand {
  width: 38px;
  border-left: 1px solid #999;
  border-right: 1px solid #888;
}
.window-btns {
  display: flex;
  justify-content: space-between;
  width: 268px;
  padding: 0 29px 0 83px;
}
.tabs {
  display: flex;
  align-items: flex-end;
  gap: 2px;
  padding-left: 10px;
}
.tabs button {
  height: 25px;
  padding: 0 14px;
  line-height: 25px;
}
.tabs button.active {
  border-radius: 3px 3px 0 0;
  background-color: #f4f4f4;
}
.tabs-toggle {
  display: flex;
  align-items: center;
  justify-content: center;
  width: 22px;
  height: 14px;
  margin: 0 4px 6px 32px;
  border: 2px solid #666;
  border-radius: 4px;
  background-color: #ddd;
}
.tabs .arrow {
  margin-bottom: 11px;
}

/*
  Ribbon
*/

.ribbon {
  display: flex;
  height: 150px;
  padding-top: 2px;
  border-bottom: 3px solid #e4e4e4;
  background: linear-gradient(90deg, #fff 1906px, #b0b0b0 1906px);
}
.panel {
  display: flex;
  flex: none;
  flex-direction: column;
  border-right: 2px solid #d4d4d4;
  background-color: #fdfdfd;
}
.panel-title {
  display: flex;
  align-items: center;
  justify-content: center;
  gap: 9px;
  height: 27px;
  margin: 0 2px 0 3px;
  color: #222;
  border-top: 2px solid #c8c8c8;
  background-color: #eee;
}
.tools {
  display: flex;
  flex: 1;
}
.tool {
  display: flex;
  flex-direction: column;
  align-items: center;
  width: 60px;
  padding-top: 10px;
  color: #aaa;
}
.tool svg {
  margin-bottom: 9px;
}
.tool .arrow {
  margin-top: 6px;
  border-top-color: #777;
}
.small-tools {
  display: grid;
  grid-template-columns: 43px 62px 43px 24px;
  grid-auto-rows: 36px;
  align-items: center;
  padding-top: 4px;
}
.small-tools.pairs {
  grid-template-columns: 34px 8px;
}
.small-tools.single {
  grid-template-columns: 36px;
  justify-items: center;
}
.draw {
  width: 318px;
}
.draw .tools {
  padding-left: 4px;
}
.draw .small-tools {
  margin-left: 15px;
}
.modify {
  width: 200px;
}
.modify .tools {
  padding-left: 11px;
}
.modify .small-tools {
  grid-template-columns: 43px 43px 62px 24px;
}
.trim {
  display: flex;
  align-items: center;
  gap: 9px;
}
.annotate {
  width: 189px;
}
.annotate .tools {
  gap: 14px;
  padding: 11px 0 0 16px;
}
.annotate .arrow {
  margin: 9px 0 0 -2px;
}
.annotate svg + svg + svg {
  margin-left: -1px;
}
.layers {
  width: 379px;
}
.layers .tools {
  gap: 5px;
  padding: 6px 0 0 11px;
}
.layers .tools > svg {
  margin-top: 4px;
}
.layer-box,
.prop-box {
  display: flex;
  align-items: center;
  gap: 5px;
  width: 311px;
  height: 33px;
  padding: 0 1px 0 8px;
  color: #999;
  border: 2px solid #d5d5d5;
}
.layer-box .arrow,
.prop-box .arrow {
  margin-left: auto;
  border-top-color: #666;
}
.block {
  width: 120px;
}
.block .tools {
  gap: 11px;
  padding: 9px 0 0 9px;
}
.props {
  width: 302px;
}
.props .tools {
  padding: 6px 0 0 9px;
}
.props .tools > svg {
  margin-top: 4px;
}
.wheel {
  width: 24px;
  height: 24px;
  margin: 4px 4px 0 7px;
  border: 1px solid #555;
  border-radius: 50%;
  background: conic-gradient(#f4b942, #e33 90deg, #d33 130deg, #a4c 170deg, #35b 230deg, #3a3 280deg, #cd4 330deg, #f4b942);
}
.prop-boxes {
  display: grid;
  gap: 3px;
  align-content: start;
}
.prop-box {
  width: 205px;
  gap: 17px;
  padding-left: 17px;
}
.prop-box .arrow {
  border-top-color: #bbb;
}
.group {
  width: 102px;
}
.group .tools {
  padding-left: 1px;
}
.group .small-tools {
  margin-left: -1px;
}
.pressed {
  width: 36px;
  height: 32px;
  padding: 3px 5px;
  border: 1px solid #3a86cc;
  background-color: #c3ddf3;
}
.utils {
  width: 114px;
}
.utils .tools {
  padding-left: 6px;
}
.utils .small-tools {
  margin-left: 6px;
}
.clipboard {
  align-items: center;
  justify-content: space-between;
  width: 92px;
  padding-bottom: 6px;
  border: 2px solid #d4d4d4;
  background: linear-gradient(#fff, #eee);
}
.clipboard .tool {
  padding-top: 5px;
}
.clipboard .arrow {
  border-top-color: #777;
}
.view {
  width: 90px;
  border-right: none;
}
.view .tools {
  padding-left: 15px;
}

/*
  Drawing tabs
*/

.doc-tabs {
  display: flex;
  align-items: flex-end;
  height: 43px;
  padding-left: 18px;
  border-bottom: 7px solid #eee;
  background-color: var(--bar);
}
.doc-tabs button {
  display: flex;
  align-items: center;
  justify-content: space-between;
  width: 196px;
  height: 32px;
  padding: 2px 35px 0 27px;
  color: #666;
  background-color: #dcdcdc;
  clip-path: path("M0 32C12 30 12 22 16 10Q20 0 30 0H180Q190 0 196 16V32Z");
}
.doc-tabs button.active {
  padding: 2px 29px 0 18px;
  color: black;
  background-color: #fafafa;
  clip-path: path("M0 32V16Q4 0 14 0H172Q182 0 186 12Q190 28 196 32Z");
}
.doc-tabs button.new {
  width: 40px;
  padding: 0;
  background-color: #eee;
  clip-path: path("M2 8H40V32H14Q4 26 2 8Z");
}

/*
  Drawing area
*/

.drawing {
  flex: 1;
  position: relative;
  border-right: 14px solid black;
}
.view-label {
  padding: 7px 2px;
  font-family: "Noto Sans CJK SC", sans-serif;
}
.mdi-btns {
  position: absolute;
  top: 9px;
  right: 12px;
  display: flex;
  gap: 9px;
}
.viewcube {
  position: absolute;
  top: 53px;
  right: 16px;
  display: grid;
  grid-template-columns: 34px 84px 34px;
  grid-template-rows: 22px 100px 22px;
  place-items: center;
  color: #999;
  font-size: 20px;
  background: radial-gradient(circle, transparent 51px, #fafafa 52px, #fafafa 66px, transparent 67px);
}
.viewcube span:first-child,
.viewcube span:last-child {
  grid-column: 1 / 4;
}
.viewcube button {
  width: 56px;
  height: 56px;
  color: #999;
  font-size: 30px;
  line-height: 46px;
  border: 1px solid #888;
  background-color: #eaebed;
}
.wcs {
  position: absolute;
  top: 221px;
  right: 56px;
  display: flex;
  align-items: center;
  gap: 8px;
  height: 25px;
  padding: 0 6px;
  color: #777;
  font: 16px "Liberation Sans", sans-serif;
  border-radius: 6px;
  background-color: #e9eaf4;
}
.navbar {
  position: absolute;
  top: 277px;
  right: 2px;
  display: flex;
  flex-direction: column;
  align-items: center;
  gap: 6px;
  width: 50px;
  height: 315px;
  padding: 1px 4px;
  border: 2px solid #c3c3c3;
  border-radius: 6px;
  background-color: #f5f5f5;
}
.navbar hr {
  width: 40px;
  border: none;
  border-top: 1px solid #ddd;
}
.navbar .corner {
  align-self: flex-end;
}
.navbar .corner.last {
  margin-top: auto;
}
.faint-arrow {
  margin: 2px 0;
  border-top-color: #ddd;
}
.sketch {
  position: absolute;
  top: 630px;
  left: 482px;
}
.sketch + .command {
  position: absolute;
  right: 374px;
  bottom: 0;
  left: 387px;
}
.command {
  display: flex;
  align-items: center;
  gap: 5px;
  height: 41px;
  padding-right: 5px;
  border: 2px solid #9e9e9e;
  border-radius: 5px;
  background-color: white;
}
.command input {
  flex: 1;
  min-width: 0;
  color: #333;
  font: 17px "Noto Sans", sans-serif;
}
.command-handle {
  display: flex;
  align-items: center;
  align-self: stretch;
  gap: 14px;
  width: 80px;
  padding-left: 10px;
  background: linear-gradient(#aaa, #757575);
}
.command-handle i {
  height: 28px;
  margin-right: -6px;
  border-left: 2px dotted #ddd;
}

/*
  Footer
*/

.footer {
  position: relative;
  display: flex;
  justify-content: space-between;
  height: 43px;
  border-top: 2px solid #a2a2a2;
  background-color: var(--bar);
}
.layouts {
  display: flex;
  padding-left: 14px;
}
.layouts button {
  width: 74px;
  height: 25px;
  color: #666;
  line-height: 24px;
  border-radius: 0 0 10px 10px;
  background-color: #e2e2e2;
}
.layouts .active {
  color: black;
  font-weight: bold;
  background-color: white;
}
.layouts button + button {
  width: 100px;
}
.layouts button.plus {
  display: flex;
  align-items: center;
  justify-content: center;
  width: 34px;
  margin-left: 8px;
  border-radius: 12px 0 12px 0;
}
.status {
  display: flex;
  padding: 2px 0 2px 3px;
  background-color: #f0f0f0;
}
.cell {
  display: flex;
  align-items: center;
  gap: 15px;
  margin-right: 3px;
  padding: 0 6px;
  background-color: #e5e5e5;
}
.cell:last-child {
  margin-right: 0;
  padding-right: 4px;
}
.cell b {
  font-size: 17px;
}
.cell .arrow {
  margin: 0 1px;
}
.cell .dots {
  margin-left: -4px;
}
.cell.polar {
  gap: 9px;
}
.cell.snap {
  gap: 11px;
}
.cell.notes,
.cell.gear {
  gap: 10px;
}
.cell.notes span {
  font: 17px "Liberation Sans", sans-serif;
}
.cell.trays {
  gap: 5px;
}
.watermark {
  position: absolute;
  right: 4px;
  bottom: 12px;
  color: rgb(255 255 255 / 80%);
  font: 36px/36px "Liberation Sans", sans-serif;
  text-shadow: 1px 1px 1px #777;
}

/*
  Dialogs
*/

.dialog {
  position: absolute;
  border: 1px solid #8c8c8c;
  background-color: var(--face);
  box-shadow: 2px 4px 14px rgb(0 0 0 / 35%);
  font-family: "Noto Sans CJK SC", sans-serif;
  font-weight: 300;
}
.dialog-title {
  display: flex;
  align-items: center;
  gap: 6px;
  height: 44px;
  padding: 0 17px 2px 10px;
  background-color: white;
}
.dialog-title button {
  margin-left: auto;
}
.key {
  font-family: "Liberation Mono", monospace;
  font-size: 15px;
  line-height: 15px;
}
fieldset {
  min-width: 0;
  padding: 0 5px;
  border: 1px solid var(--line);
}
legend {
  padding: 0 4px;
  line-height: 18px;
}
.row {
  display: flex;
  align-items: center;
}
.btn {
  width: 112px;
  height: 30px;
  line-height: 24px;
  border: 1px solid var(--control-line);
  background-color: var(--control);
}
.btn.default {
  border: 2px solid var(--blue);
}
.select {
  position: relative;
  display: flex;
  align-items: center;
  height: 30px;
  padding: 0 4px 2px;
  border: 1px solid var(--control-line);
  background-color: var(--control);
}
.select select {
  width: 100%;
  line-height: 24px;
  appearance: none;
}
.select::after {
  content: "";
  position: absolute;
  top: 50%;
  right: 9px;
  width: 8px;
  height: 8px;
  margin-top: -6px;
  border: solid #444;
  border-width: 0 1px 1px 0;
  transform: rotate(45deg);
}
.select.mono {
  font-family: "Liberation Mono", monospace;
  font-size: 15px;
}
.select.white {
  font-family: "Liberation Serif", serif;
  border-color: #7a7a7a;
  background-color: white;
}
.select.focus {
  padding-bottom: 0;
  border-color: var(--blue);
}
.select.focus input {
  width: 37px;
  height: 20px;
  color: white;
  background-color: var(--blue);
}
.check {
  display: flex;
  align-items: center;
}
.check .key {
  padding-top: 3px;
}
.check input {
  position: relative;
  flex: none;
  width: 20px;
  height: 20px;
  margin-right: 4px;
  border: 1px solid #333;
  background-color: white;
  appearance: none;
}
.check input[type="radio"] {
  border-radius: 50%;
}
.check input:checked::after {
  content: "";
  position: absolute;
  top: 2px;
  left: 6px;
  width: 6px;
  height: 11px;
  border: solid #222;
  border-width: 0 2px 2px 0;
  transform: rotate(42deg);
}
.check.off {
  color: #8a8a8a;
}
.check.off input,
.check.off input::after {
  border-color: #ccc;
}

/*
  [1] Plot dialog
*/

.plot {
  top: 117px;
  left: 420px;
  width: 1123px;
}
.plot .dialog-title {
  color: #888;
}
.plot-body {
  display: grid;
  grid-template-columns: 738px 337px;
  column-gap: 17px;
  padding: 15px 18px 16px 11px;
}
.plot-left {
  display: grid;
  grid-template-rows: 89px 217px 76px 106px 127px;
  gap: 9px;
}
.plot-right {
  display: grid;
  grid-template-rows: 89px 149px 275px 116px;
  gap: 8px;
  align-content: start;
}
.row.first {
  padding: 20px 0 0 15px;
}
.row.first label,
.printer .row label {
  width: 99px;
}
.setup {
  width: 438px;
}
.with-icon {
  gap: 5px;
}
.btn.add {
  width: 147px;
  margin-left: 8px;
}
.printer .row {
  padding: 4px 0 7px 15px;
}
.printer dl {
  display: grid;
  grid-template-columns: 99px 1fr;
  grid-auto-rows: 34px;
  align-items: center;
  padding-left: 15px;
}
.printer .check {
  height: 46px;
  padding-left: 15px;
}
.paper .select {
  margin: 12px 15px 0;
}
.area label {
  display: block;
  padding: 11px 15px 8px;
}
.area .select {
  width: 151px;
  margin-left: 15px;
}
.plot-pair {
  display: grid;
  grid-template-columns: 396px 335px;
  gap: 7px;
}
.offset .row {
  padding: 11px 0 2px 14px;
}
.offset label {
  width: 32px;
}
.offset input {
  width: 106px;
  height: 32px;
  margin-right: 9px;
  padding: 0 4px 6px;
  font: 18px "Liberation Serif", serif;
  border: 1px solid #7a7a7a;
  background-color: white;
}
.scale {
  display: flex;
  flex-direction: column;
  justify-content: flex-end;
  gap: 14px;
  margin-top: 9px;
  padding: 0 0 20px 89px;
}
.scale > input,
.shade input {
  width: 90px;
  height: 31px;
  border: 1px solid #ccc;
  box-shadow: inset 0 0 0 1px white;
}
.plot-right .row.first {
  align-items: flex-start;
  padding-left: 18px;
}
.plot-right .row .select {
  width: 257px;
}
.btn.edit {
  display: flex;
  align-items: center;
  justify-content: center;
  width: 38px;
  height: 38px;
  border-color: #bbb;
  background-color: #ccc;
}
.shade,
.options,
.orient {
  margin-top: 9px;
}
.shade {
  display: flex;
  flex-direction: column;
  align-items: flex-end;
  gap: 10px;
  padding: 17px 14px 0;
}
.shade .select,
.shade input {
  width: 188px;
}
.options {
  padding: 72px 0 0 23px;
}
.options .check {
  height: 31px;
}
.options .skip {
  margin-top: 31px;
}
.orient {
  padding: 32px 16px 0 23px;
}
.orient .check {
  height: 33px;
}
.orient-row {
  display: flex;
  align-items: flex-start;
  justify-content: space-between;
}
.orient-row > div {
  padding-top: 3px;
}
.page-icon {
  position: relative;
}
.page-icon b {
  position: absolute;
  inset: 14px 0 0;
  font: bold 24px/24px "Liberation Sans", sans-serif;
  text-align: center;
}
.plot-foot {
  grid-column: 1 / 3;
  display: flex;
  align-items: center;
  gap: 10px;
  padding: 12px 28px 0 1px;
}
.btn.preview {
  width: 119px;
  margin-right: auto;
}
.btn.apply {
  width: 162px;
}
.round {
  width: 30px;
  height: 30px;
}

/*
  [2] PDF options dialog
*/

.pdf {
  top: 242px;
  left: 598px;
  width: 767px;
  border-color: #555;
}
.pdf .dialog-title {
  padding: 0 16px 0 11px;
}
.pdf-body {
  padding: 19px 18px 21px 17px;
}
.show {
  height: 32px;
  margin-bottom: 9px;
  padding-left: 21px;
}
.quality {
  height: 178px;
  margin-bottom: 18px;
}
.quality .row {
  height: 45px;
  padding-left: 15px;
}
.quality legend + .row {
  margin-top: 9px;
}
.quality label {
  width: 189px;
}
.quality label.indent {
  padding-left: 4px;
}
.quality .select {
  width: 158px;
  height: 26px;
}
.unit {
  margin-left: 16px;
}
.merge-icon {
  margin: 6px 0 0 12px;
}
.data {
  height: 150px;
}
.data-cols {
  display: grid;
  grid-template-columns: 337px 1fr;
  padding-left: 15px;
}
.data-cols > div {
  padding-top: 12px;
}
.data .check {
  height: 37px;
}
.data-cols > .fonts {
  padding-top: 2px;
}
.fonts p {
  line-height: 40px;
}
.fonts .check {
  height: 40px;
  padding-left: 23px;
}
.pdf-foot {
  display: flex;
  justify-content: flex-end;
  gap: 24px;
  padding: 18px 9px 0 0;
}
.pdf-foot .btn {
  width: 111px;
}
.mark {
  position: absolute;
  top: 169px;
  left: 337px;
}
```
